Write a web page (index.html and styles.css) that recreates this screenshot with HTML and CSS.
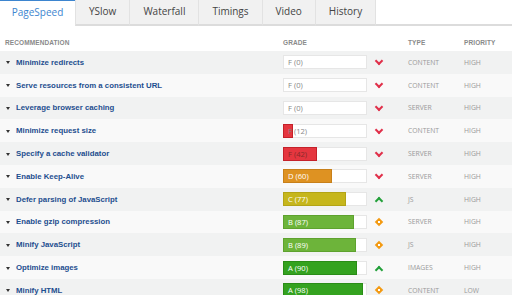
FILE: index.html
```html
<!DOCTYPE html>
<html lang="en">
<head>
  <meta charset="UTF-8">
  <title>PageSpeed report</title>
  <link rel="stylesheet" href="styles.css">
</head>
<body>
  <nav class="tabs">
    <a class="tab active">PageSpeed</a>
    <a class="tab">YSlow</a>
    <a class="tab">Waterfall</a>
    <a class="tab">Timings</a>
    <a class="tab">Video</a>
    <a class="tab">History</a>
    <span class="tab-fill"></span>
  </nav>

  <div class="report">
    <div class="row head">
      <span>Recommendation</span>
      <span>Grade</span>
      <span>Type</span>
      <span>Priority</span>
    </div>

    <div class="row">
      <span class="name">Minimize redirects</span>
      <span class="grade"><span class="bar"><span class="fill" style="width:0%"></span><span class="label">F (0)</span></span><i class="ic down"></i></span>
      <span class="type">Content</span><span class="prio">High</span>
    </div>
    <div class="row">
      <span class="name">Serve resources from a consistent URL</span>
      <span class="grade"><span class="bar"><span class="fill" style="width:0%"></span><span class="label">F (0)</span></span><i class="ic down"></i></span>
      <span class="type">Content</span><span class="prio">High</span>
    </div>
    <div class="row">
      <span class="name">Leverage browser caching</span>
      <span class="grade"><span class="bar"><span class="fill" style="width:0%"></span><span class="label">F (0)</span></span><i class="ic down"></i></span>
      <span class="type">Server</span><span class="prio">High</span>
    </div>
    <div class="row">
      <span class="name">Minimize request size</span>
      <span class="grade"><span class="bar"><span class="fill f" style="width:12%"></span><span class="label">F (12)</span></span><i class="ic down"></i></span>
      <span class="type">Content</span><span class="prio">High</span>
    </div>
    <div class="row">
      <span class="name">Specify a cache validator</span>
      <span class="grade"><span class="bar"><span class="fill f" style="width:42%"></span><span class="label dark">F (42)</span></span><i class="ic down"></i></span>
      <span class="type">Server</span><span class="prio">High</span>
    </div>
    <div class="row">
      <span class="name">Enable Keep-Alive</span>
      <span class="grade"><span class="bar"><span class="fill d" style="width:60%"></span><span class="label on">D (60)</span></span><i class="ic down"></i></span>
      <span class="type">Server</span><span class="prio">High</span>
    </div>
    <div class="row">
      <span class="name">Defer parsing of JavaScript</span>
      <span class="grade"><span class="bar"><span class="fill c" style="width:77%"></span><span class="label on">C (77)</span></span><i class="ic up"></i></span>
      <span class="type">JS</span><span class="prio">High</span>
    </div>
    <div class="row">
      <span class="name">Enable gzip compression</span>
      <span class="grade"><span class="bar"><span class="fill b" style="width:87%"></span><span class="label on">B (87)</span></span><i class="ic mid"></i></span>
      <span class="type">Server</span><span class="prio">High</span>
    </div>
    <div class="row">
      <span class="name">Minify JavaScript</span>
      <span class="grade"><span class="bar"><span class="fill b" style="width:89%"></span><span class="label on">B (89)</span></span><i class="ic mid"></i></span>
      <span class="type">JS</span><span class="prio">High</span>
    </div>
    <div class="row">
      <span class="name">Optimize images</span>
      <span class="grade"><span class="bar"><span class="fill a" style="width:90%"></span><span class="label on">A (90)</span></span><i class="ic up"></i></span>
      <span class="type">Images</span><span class="prio">High</span>
    </div>
    <div class="row">
      <span class="name">Minify HTML</span>
      <span class="grade"><span class="bar"><span class="fill a" style="width:98%"></span><span class="label on">A (98)</span></span><i class="ic mid"></i></span>
      <span class="type">Content</span><span class="prio">Low</span>
    </div>
  </div>
</body>
</html>
```

FILE: styles.css
```css
* { margin: 0; padding: 0; box-sizing: border-box; }
body {
  font-family: "Open Sans", sans-serif;
  background: #fff;
  color: #333;
  width: 512px;
  overflow: hidden;
}

/* tabs */
.tabs {
  display: flex;
  height: 26px;
}
.tab {
  height: 26px;
  padding: 0 13px;
  display: flex;
  align-items: center;
  padding-bottom: 2px;
  font-size: 10px;
  color: #444;
  background: #f1f1f1;
  border-left: 1px solid #e2e2e2;
  border-bottom: 2px solid #dcdcdc;
}
.tab.active {
  background: #fff;
  color: #3d85cf;
  border-left: 0;
  border-top: 1px solid #3d85cf;
  border-bottom-color: #fff;
  width: 75px;
  justify-content: center;
}
.tab-fill {
  flex: 1;
  border-left: 1px solid #e2e2e2;
  border-bottom: 2px solid #dcdcdc;
}

/* table */
.row {
  display: grid;
  grid-template-columns: 283px 125px 56px 1fr;
  align-items: center;
  height: 22.8px;
  font-size: 7px;
}
.row:nth-child(even) { background: #f1f2f2; }
.row:nth-child(odd) { background: #f9f9f9; }
.row.head {
  height: 25px;
  background: #fff;
  align-items: end;
  padding-bottom: 5px;
  font-family: "Liberation Sans", sans-serif;
  font-weight: bold;
  font-size: 6.5px;
  color: #8a8a8a;
  text-transform: uppercase;
  letter-spacing: 0.1px;
}
.row.head span:first-child { padding-left: 5px; }

.name {
  font-family: "Liberation Sans", sans-serif;
  font-weight: bold;
  font-size: 7.8px;
  color: #1d4e8f;
  padding-left: 16px;
  position: relative;
}
.name::before {
  content: "";
  position: absolute;
  left: 6px;
  top: 50%;
  margin-top: -1px;
  border-left: 2px solid transparent;
  border-right: 2px solid transparent;
  border-top: 3px solid #333;
}

.grade {
  display: flex;
  align-items: center;
  gap: 7px;
}
.bar {
  position: relative;
  width: 84px;
  height: 14px;
  background: #fff;
  border: 1px solid #e6e6e6;
  display: flex;
  align-items: center;
}
.fill {
  position: absolute;
  left: -1px;
  top: -1px;
  bottom: -1px;
  border: 1px solid transparent;
}
.fill.f { background: #e5363f; border-color: #c4212a; }
.fill.d { background: #de9222; border-color: #c8801a; }
.fill.c { background: #c6b61c; border-color: #b3a416; }
.fill.b { background: #6db43a; border-color: #5ea22e; }
.fill.a { background: #34a21f; border-color: #2a8c17; }
.label {
  position: relative;
  padding-left: 4px;
  font-size: 7.6px;
  color: #888;
}
.label.dark { color: #8a2a2a; }
.label.on { color: #fff; }

.ic {
  display: block;
  width: 9px;
  height: 8px;
  position: relative;
}
.ic.down::before, .ic.up::before {
  content: "";
  position: absolute;
  left: 2px;
  width: 4px;
  height: 4px;
  border-right: 2px solid;
  border-bottom: 2px solid;
}
.ic.down { color: #e0304a; }
.ic.down::before { top: 0; transform: rotate(45deg); }
.ic.up { color: #23a03a; }
.ic.up::before { top: 3px; transform: rotate(-135deg); }
.ic.mid::before {
  content: "";
  position: absolute;
  left: 1.5px;
  top: 1px;
  width: 6px;
  height: 6px;
  background: #f39a12;
  transform: rotate(45deg);
}
.ic.mid::after {
  content: "";
  position: absolute;
  left: 3.5px;
  top: 3px;
  width: 2px;
  height: 2px;
  background: #fff;
}

.type, .prio {
  font-size: 6.8px;
  color: #999;
  text-transform: uppercase;
}
```
